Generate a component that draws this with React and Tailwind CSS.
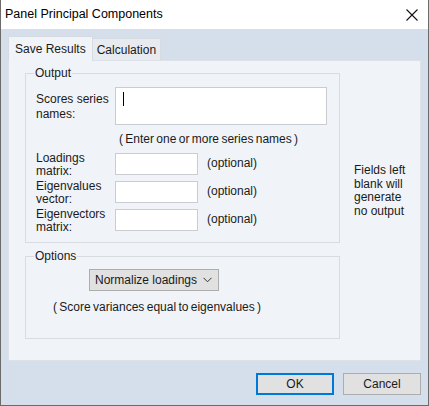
import React from "react";

const F = { fontFamily: '"Liberation Sans", Arial, sans-serif' };

function Label({ a, b, extra = "" }) {
  return (
    <div className={"w-[89px] pl-[10px] leading-[13px] text-[12px] text-[#1a1a1a] " + extra}>
      <div>{a}</div>
      <div>{b}</div>
    </div>
  );
}

export default function App() {
  return (
    <div className="w-[429px] h-[406px] overflow-hidden bg-white whitespace-nowrap" style={F}>
      <div className="w-[429px] h-[406px] flex flex-col border-l border-r border-b border-[#6b6b6b] bg-[#d5dfec]">
        {/* title bar */}
        <div className="h-[29px] bg-white flex items-center justify-between pl-[4px] pr-[10px]">
          <span className="text-[12.5px] text-[#000] leading-none">Panel Principal Components</span>
          <svg width="12" height="12" viewBox="0 0 12 12">
            <path d="M0.5 0.5 L11.5 11.5 M11.5 0.5 L0.5 11.5" stroke="#111" strokeWidth="1.1" />
          </svg>
        </div>
        {/* body */}
        <div className="flex flex-col pl-[7px] pr-[7px] pt-[7px]">
          <div className="flex items-end h-[24px]">
            <div className="h-[25px] px-[6px] flex items-center bg-[#f0f4f9] border border-b-0 border-[#d6dbe2] text-[12px] text-[#1a1a1a] relative top-[1px]">
              Save Results
            </div>
            <div className="h-[22px] px-[4px] flex items-center bg-[#e7eaee] border border-b-0 border-l-0 border-[#d6dbe2] text-[12px] text-[#1a1a1a]">
              Calculation
            </div>
          </div>
          <div className="h-[301px] bg-[#f0f4f9] border border-[#dde2e8] flex pl-[16px] pt-[5px]">
            <div className="w-[315px] flex flex-col gap-[6px]">
              <fieldset className="h-[177px] border border-[#d8dce1] m-0">
                <legend className="ml-[8px] px-[1px] text-[12px] text-[#1a1a1a] leading-[14px]">Output</legend>
                <div className="flex flex-col">
                  <div className="mt-[7px] flex items-start">
                    <Label a="Scores series" b="names:" extra="pt-[5px] leading-[15px]" />
                    <div className="w-[212px] h-[38px] bg-white border border-[#c9ccd1] pl-[7px] pt-[4px]">
                      <div className="w-px h-[14px] bg-[#000]"></div>
                    </div>
                  </div>
                  <div className="text-[12px] text-[#1a1a1a] pl-[93px] mt-[7px] leading-[14px] [word-spacing:-1px]">
                    ( Enter one or more series names )
                  </div>
                  <div className="flex flex-col gap-[6px] mt-[7px]">
                    {[
                      ["Loadings", "matrix:"],
                      ["Eigenvalues", "vector:"],
                      ["Eigenvectors", "matrix:"],
                    ].map(([a, b]) => (
                      <div key={a} className="flex items-start h-[22px]">
                        <Label a={a} b={b} extra="-mt-[1px]" />
                        <div className="w-[83px] h-[22px] bg-white border border-[#c9ccd1]"></div>
                        <span className="ml-[9px] mt-[3px] text-[12px] leading-[14px] text-[#1a1a1a]">(optional)</span>
                      </div>
                    ))}
                  </div>
                </div>
              </fieldset>
              <fieldset className="h-[90px] border border-[#d8dce1] m-0">
                <legend className="ml-[8px] px-[1px] text-[12px] text-[#1a1a1a] leading-[14px]">Options</legend>
                <div className="flex flex-col items-start">
                  <div className="ml-[63px] mt-[6px] w-[130px] h-[22px] bg-[#e1e1e1] border border-[#adadad] flex items-center justify-between pl-[5px] pr-[6px] text-[12px] text-[#1a1a1a]">
                    <span>Normalize loadings</span>
                    <svg width="9" height="6" viewBox="0 0 9 6">
                      <path d="M0.5 0.8 L4.5 4.8 L8.5 0.8" stroke="#333" strokeWidth="1" fill="none" />
                    </svg>
                  </div>
                  <div className="ml-[27px] mt-[9px] text-[12px] text-[#1a1a1a] leading-[14px] [word-spacing:-1px]">
                    ( Score variances equal to eigenvalues )
                  </div>
                </div>
              </fieldset>
            </div>
            <div className="ml-[14px] mt-[98px] text-[12px] leading-[13.5px] text-[#1a1a1a]">
              <div>Fields left</div>
              <div>blank will</div>
              <div>generate</div>
              <div>no output</div>
            </div>
          </div>
          <div className="flex justify-end gap-[9px] mt-[12px]">
            <div className="w-[78px] h-[22px] bg-[#e1e1e1] border-2 border-[#0078d7] flex items-center justify-center text-[12px] text-[#1a1a1a]">OK</div>
            <div className="w-[78px] h-[22px] bg-[#e1e1e1] border border-[#adadad] flex items-center justify-center text-[12px] text-[#1a1a1a]">Cancel</div>
          </div>
        </div>
      </div>
    </div>
  );
}
